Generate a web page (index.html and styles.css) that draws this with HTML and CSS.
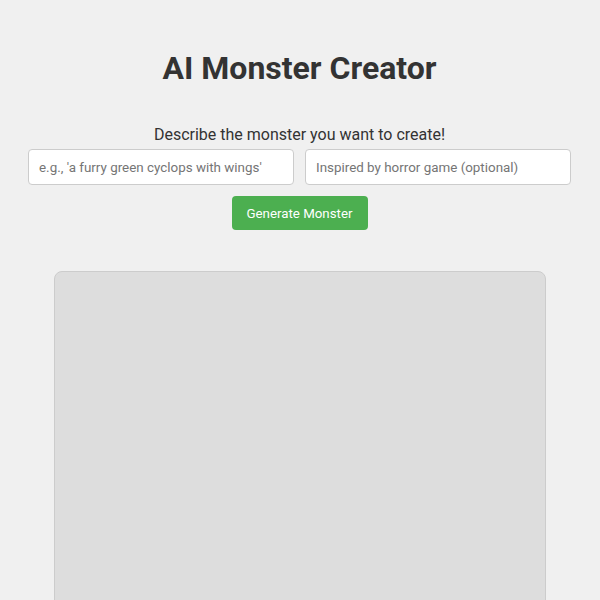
FILE: index.html
```html
<!DOCTYPE html>
<html>
<head>
<meta charset="utf-8">
<link rel="stylesheet" href="styles.css">
</head>
<body>
<div class="page">
  <h1 class="title">AI Monster Creator</h1>
  <p class="prompt">Describe the monster you want to create!</p>
  <div class="inputs">
    <input class="field" type="text" placeholder="e.g., 'a furry green cyclops with wings'">
    <input class="field" type="text" placeholder="Inspired by horror game (optional)">
  </div>
  <div class="actions">
    <button class="btn">Generate Monster</button>
  </div>
  <div class="canvas"></div>
</div>
</body>
</html>
```
FILE: styles.css
```css
html, body {
  margin: 0;
  padding: 0;
  background: #f0f0f0;
  font-family: Roboto, "Liberation Sans", sans-serif;
  color: #333;
}
.page {
  padding: 0 29px 0 28px;
  display: flex;
  flex-direction: column;
  align-items: stretch;
}
.title {
  margin: 49px 0 0;
  font-size: 32px;
  font-weight: 700;
  text-align: center;
  line-height: 38px;
  color: #333;
}
.prompt {
  margin: 38px 0 0;
  font-size: 16px;
  line-height: 20px;
  text-align: center;
  color: #333;
}
.inputs {
  margin-top: 4px;
  display: grid;
  grid-template-columns: 1fr 1fr;
  gap: 11px;
}
.field {
  box-sizing: border-box;
  height: 36px;
  padding: 0 10px;
  border: 1px solid #ccc;
  border-radius: 4px;
  background: #fff;
  font-family: Roboto, "Liberation Sans", sans-serif;
  font-size: 13.4px;
  color: #333;
  outline: none;
}
.field::placeholder {
  color: #757575;
}
.actions {
  margin-top: 11px;
  display: flex;
  justify-content: center;
}
.btn {
  width: 136px;
  height: 34px;
  border: none;
  border-radius: 4px;
  background: #4caf50;
  color: #fff;
  font-family: Roboto, "Liberation Sans", sans-serif;
  font-size: 13.3px;
  cursor: pointer;
}
.canvas {
  align-self: center;
  margin-top: 41px;
  width: 492px;
  height: 420px;
  box-sizing: border-box;
  background: #dddddd;
  border: 1px solid #cccccc;
  border-radius: 8px;
}
```
